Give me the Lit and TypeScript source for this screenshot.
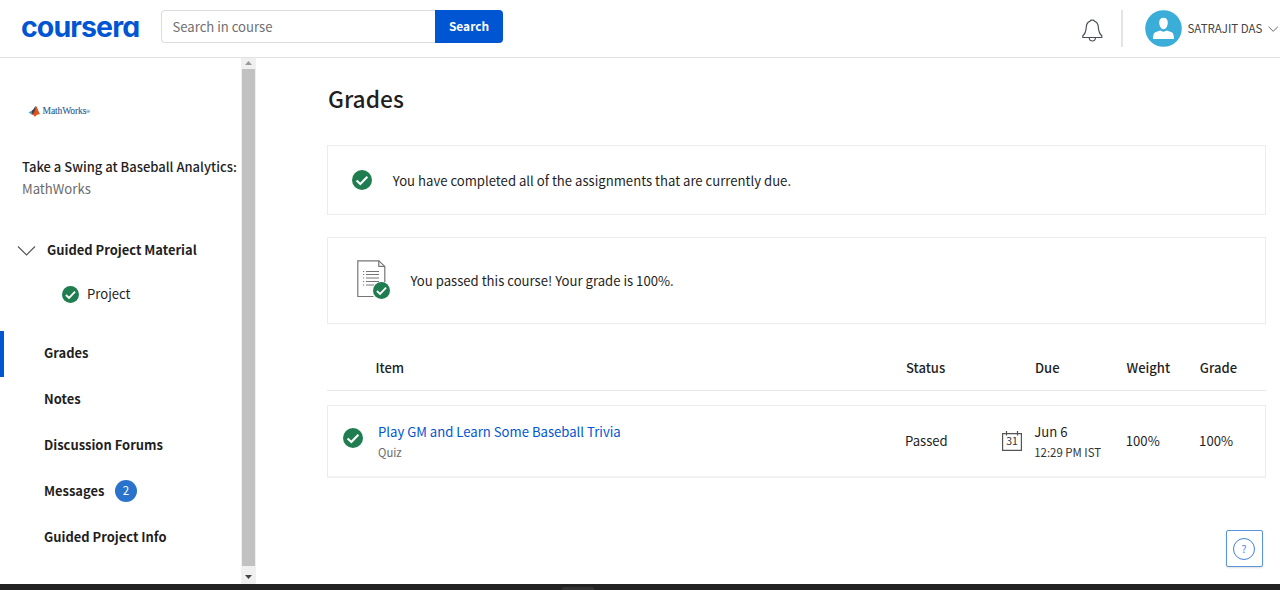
import { LitElement, html, css, svg } from "lit";
import { customElement, property } from "lit/decorators.js";
import { classMap } from "lit/directives/class-map.js";

@customElement("check-badge")
class CheckBadge extends LitElement {
  @property({ type: Number }) size = 20;
  static styles = css`
    :host { display: block; flex: none; line-height: 0; }
    .svg { display: block; }
  `;
  render() {
    return html`<svg class="svg" width=${this.size} height=${this.size} viewBox="0 0 20 20">
      <circle cx="10" cy="10" r="10" fill="#1f7d50"></circle>
      <path d="M4.6 10.6 8.3 14 15.4 6.7" fill="none" stroke="#fff" stroke-width="2.1"></path>
    </svg>`;
  }
}

@customElement("site-header")
class SiteHeader extends LitElement {
  static styles = css`
    :host { display: flex; height: 57px; border-bottom: 1px solid #e1e1e1; background: #fff; }
    .logo { width: 139px; padding-left: 21px; box-sizing: border-box; height: 54px; color: #0056d2;
      font: 700 28.5px/53px Inter, sans-serif; font-feature-settings: "cv11"; letter-spacing: -0.9px; white-space: nowrap; }
    .search { display: flex; margin: 10px 0 0 21.5px; height: 33px; }
    .field { width: 274.5px; box-sizing: border-box; border: 1px solid #dcdcdf; border-right: 0; border-radius: 4px 0 0 4px;
      padding-left: 11px; line-height: 31px; font-size: 13.1px; color: #6f6f6f; }
    .button { width: 68px; background: #0056d2; color: #fff; border-radius: 0 4px 4px 0; font-weight: 700; font-size: 11.9px;
      line-height: 32px; text-align: center; }
    .right { display: flex; margin-left: auto; width: 199px; }
    .bell { margin: 19px 0 0 0; width: 24px; height: 24px; }
    .rule { width: 1.5px; height: 37px; margin: 10px 22.5px 0 16px; background: #e4e4e4; }
    .avatar { margin-top: 10px; width: 37px; height: 37px; flex: none; }
    .name { margin-left: 5.5px; line-height: 57px; font-size: 11.5px; color: #444; white-space: nowrap; width: 76px; }
    .chev { margin: 25px 0 0 4px; flex: none; }
  `;
  render() {
    return html`
      <div class="logo">coursera</div>
      <div class="search"><div class="field">Search in course</div><div class="button">Search</div></div>
      <div class="right">
        <svg class="bell" viewBox="0 0 24 24" fill="none" stroke="#4a4f57" stroke-width="1.15">
          <path d="M1.8 18.5v-1.8C4.6 14.3 5 12.4 5.2 8.6 5.4 4.6 7.2 2.7 9.2 2.1 9.6.9 10.4 1.2 11.3 1.2S13 .9 13.4 2.1c2 .6 3.8 2.5 4 6.5.2 3.8.6 5.7 3.4 8.1v1.8z"></path>
          <path d="M8.2 18.8c.2 4.2 6.1 4.2 6.3 0"></path>
        </svg>
        <div class="rule"></div>
        <svg class="avatar" viewBox="0 0 37 37">
          <circle cx="18.5" cy="18.5" r="18.3" fill="#3badd9"></circle>
          <path d="M18.5 7.8c3 0 4.4 2 4.3 5-.1 3.2-1.8 6.5-4.3 6.5s-4.2-3.3-4.3-6.5c-.1-3 1.3-5 4.3-5z" fill="#fff"></path>
          <path d="M8 29c.2-4.6.8-6.1 3-6.9l4.3-1.5c1.7 1.5 4.7 1.5 6.4 0l4.3 1.500c2.200.8 2.800 2.300 3 6.900z" fill="#fff"></path>
        </svg>
        <div class="name">SATRAJIT DAS</div>
        <svg class="chev" width="10" height="8" viewBox="0 0 10 8"><path d="M.6 1.8 5.2 6.3 9.8 1.8" fill="none" stroke="#666" stroke-width="1"></path></svg>
      </div>`;
  }
}

@customElement("side-nav")
class SideNav extends LitElement {
  static styles = css`
    :host { display: flex; width: 256px; height: 526px; flex: none; background: #fff; color: #1f1f1f; }
    .body { width: 241px; overflow: hidden; white-space: nowrap; }
    .brand { display: flex; align-items: center; gap: 1.5px; height: 14px; margin: 46.5px 0 0 28px; }
    .brand-name { font: 400 9.6px/12px "Liberation Serif", serif; color: #2b6090; letter-spacing: -0.15px; -webkit-text-stroke: 0.1px #2b6090; }
    .reg { font-size: 5px; vertical-align: 1.5px; }
    .course { margin: 37.5px 0 0 22px; line-height: 22px; font-size: 13px; font-weight: 500; }
    .partner { margin-left: 22px; line-height: 22px; font-size: 13.15px; color: #6b6b6b; }
    .group { display: flex; align-items: flex-start; margin: 39px 0 0 17px; height: 24px; line-height: 22px; font-size: 12.95px; font-weight: 700; }
    .group-icon { width: 19px; height: 12px; margin: 6px 11px 0 0; }
    .sub { display: flex; align-items: center; gap: 8px; margin: 19px 0 0 62px; height: 24px; line-height: 22px; font-size: 13.1px; }
    .items { margin-top: 25px; }
    .item { display: flex; align-items: center; height: 45.8px; box-sizing: border-box; padding-left: 40px; border-left: 4px solid transparent; font-size: 12.95px; font-weight: 700; }
    .label { margin-top: -2px; }
    .active { border-left-color: #0056d2; }
    .count { width: 22px; height: 22px; border-radius: 50%; background: #2a73cc; color: #fff; font-size: 11.5px; line-height: 21px; text-align: center; margin-left: 10.5px; font-weight: 400; }
    .bar { width: 15px; background: #f0f0f0; display: flex; flex-direction: column; align-items: center; }
    .thumb { width: 13px; height: 497px; background: #c1c1c1; margin-right: 1px; }
    .up { height: 9px; display: flex; align-items: center; padding-bottom: 2px; }
    .down { flex: 1; display: flex; align-items: center; padding-top: 4px; }
  `;
  private items: { label: string; active?: boolean; count?: number }[] = [
    { label: "Grades", active: true },
    { label: "Notes" },
    { label: "Discussion Forums" },
    { label: "Messages", count: 2 },
    { label: "Guided Project Info" },
  ];
  render() {
    return html`
      <div class="body">
        <div class="brand">
          <svg width="13" height="13" viewBox="0 0 13 13">
            <path d="M.5 7.5 4 5.5 6 7.5 3.8 9.5z" fill="#4b9bc4"></path>
            <path d="M4 5.5C6 4.5 6.5 1.5 8 1L6.5 8 3.8 9.5z" fill="#31435e"></path>
            <path d="M8 1c1.5 1.5 2.5 6 4.6 8.8-2-1-3.6-.5-5.8 2.2-.6-1.5-1.5-2.3-3-2.5C6 8 7 4 8 1z" fill="#d9571f"></path>
            <path d="M8 1C7 4 6 8 3.8 9.5 6 9.5 7.5 5 8 1z" fill="#8e2a1c"></path>
          </svg>
          <div class="brand-name">MathWorks<span class="reg">®</span></div>
        </div>
        <div class="course">Take a Swing at Baseball Analytics:</div>
        <div class="partner">MathWorks</div>
        <div class="group">
          <svg class="group-icon" viewBox="0 0 19 12"><path d="M1 1.5 9.5 10 18 1.5" fill="none" stroke="#555" stroke-width="1.1"></path></svg>
          <span>Guided Project Material</span>
        </div>
        <div class="sub"><check-badge size="17"></check-badge><span>Project</span></div>
        <div class="items">
          ${this.items.map((i) => html`<div class=${classMap({ item: true, active: !!i.active })}>
            <span class="label">${i.label}</span>${i.count ? html`<span class="count">${i.count}</span>` : null}
          </div>`)}
        </div>
      </div>
      <div class="bar">
        <div class="up"><svg width="7" height="4" viewBox="0 0 7 4"><path d="M0 4 3.5 0 7 4z" fill="#9a9a9a"></path></svg></div>
        <div class="thumb"></div>
        <div class="down"><svg width="7" height="4" viewBox="0 0 7 4"><path d="M0 0 3.5 4 7 0z" fill="#444"></path></svg></div>
      </div>`;
  }
}

@customElement("grades-page")
class GradesPage extends LitElement {
  static styles = css`
    :host { display: block; width: 939px; margin-left: 71px; color: #1f1f1f; font-size: 13.13px; white-space: nowrap; }
    .title { margin: 23px 0 0 1px; height: 36px; line-height: 36px; font-size: 22.75px; font-weight: 500; }
    .card { display: flex; align-items: center; box-sizing: border-box; border: 1px solid #ececec; }
    .done { height: 70px; margin-top: 28px; padding-left: 24px; gap: 20.8px; }
    .passed { height: 87px; margin-top: 22px; padding-left: 29px; }
    .doc { position: relative; width: 34px; height: 40px; margin: -3px 19.5px 0 0; }
    .doc-check { position: absolute; left: 16px; top: 23px; }
    .grid { display: grid; grid-template-columns: 51px 528px 96.5px 32.5px 91.5px 73.3px 1fr; }
    .heads { height: 45px; margin-top: 22px; line-height: 44px; border-bottom: 1px solid #e8e8e8; font-weight: 500; box-sizing: border-box; font-size: 13.05px; }
    .heads .c-item { margin-left: -2.5px; }
    .row { margin-top: 14px; height: 73px; border: 1px solid #ececec; border-bottom: 2px solid #f2f2f2; box-sizing: border-box; align-items: center; grid-template-columns: 50px 527px 96.8px 32.5px 91.5px 73.3px 1fr; }
    .status-icon { padding: 0 0 7px 14.5px; }
    .two { padding-top: 2px; }
    .cell { margin-top: -1px; }
    .link { color: #0056d2; line-height: 20px; }
    .sub { line-height: 20px; font-size: 11.3px; color: #6b6b6b; }
    .time { line-height: 20px; font-size: 11.4px; color: #333; }
    .date { line-height: 20px; }
    .cal { font: 10.5px "Noto Sans CJK SC", sans-serif; }
  `;
  render() {
    return html`
      <div class="title">Grades</div>
      <div class="card done"><check-badge size="20"></check-badge><span>You have completed all of the assignments that are currently due.</span></div>
      <div class="card passed">
        <div class="doc">
          <svg width="34" height="40" viewBox="0 0 34 40" fill="none" stroke="#767676" stroke-width="1.2">
            <path d="M16.5 37.5H.8V1.8h21l6 5.6V23"></path>
            <path d="M21.8 1.8v5.6h6"></path>
            <path d="M9 12.5h13M9 15.5h13M9 19h13M9 22.5h13M9 26h8" stroke-width="1"></path>
            <path d="M6 12.5h1.2M6 15.5h1.2M6 19h1.2M6 22.5h1.2M6 26h1.2" stroke-width="1"></path>
          </svg>
          <check-badge class="doc-check" size="17"></check-badge>
        </div>
        <span>You passed this course! Your grade is 100%.</span>
      </div>
      <div class="grid heads">
        <span></span><span class="c-item">Item</span><span>Status</span><span></span><span>Due</span><span>Weight</span><span>Grade</span>
      </div>
      <div class="grid row">
        <div class="status-icon"><check-badge size="20"></check-badge></div>
        <div class="two"><div class="link">Play GM and Learn Some Baseball Trivia</div><div class="sub">Quiz</div></div>
        <div class="cell">Passed</div>
        <svg width="20" height="20" viewBox="0 0 20 20">
          <path d="M.6 2.6h18.8v16.8H.6zM4.5 0v4.5M15.5 0v4.5" fill="none" stroke="#555" stroke-width="1.2"></path>
          ${svg`<text class="cal" x="10" y="14.2" text-anchor="middle" fill="#333">31</text>`}
        </svg>
        <div class="two"><div class="date">Jun 6</div><div class="time">12:29 PM IST</div></div>
        <div class="cell">100%</div>
        <div class="cell">100%</div>
      </div>`;
  }
}

@customElement("app-root")
class AppRoot extends LitElement {
  static styles = css`
    :host { display: flex; flex-direction: column; position: relative; width: 1280px; height: 590px; overflow: hidden; background: #fff;
      font-family: "Noto Sans CJK SC", "Noto Sans", sans-serif; }
    .content { display: flex; height: 526px; }
    .taskbar { height: 6px; background: #222; display: flex; align-items: flex-end; }
    .tab { width: 32px; height: 3px; margin-left: 562px; background: #333; border-radius: 2px 2px 0 0; }
    .help { position: absolute; right: 17px; bottom: 23px; width: 37px; height: 37px; box-sizing: border-box; border: 1px solid #5b95dc;
      border-radius: 2px; background: #fff; display: flex; align-items: center; justify-content: center; box-shadow: 0 1px 2px #0002; }
    .ring { width: 22px; height: 22px; box-sizing: border-box; border: 1.2px solid #4384d6; border-radius: 50%; color: #4384d6;
      font-size: 10.5px; line-height: 20px; text-align: center; margin-right: 1px; }
  `;
  render() {
    return html`
      <site-header></site-header>
      <div class="content"><side-nav></side-nav><grades-page></grades-page></div>
      <div class="taskbar"><div class="tab"></div></div>
      <div class="help"><div class="ring">?</div></div>`;
  }
}
